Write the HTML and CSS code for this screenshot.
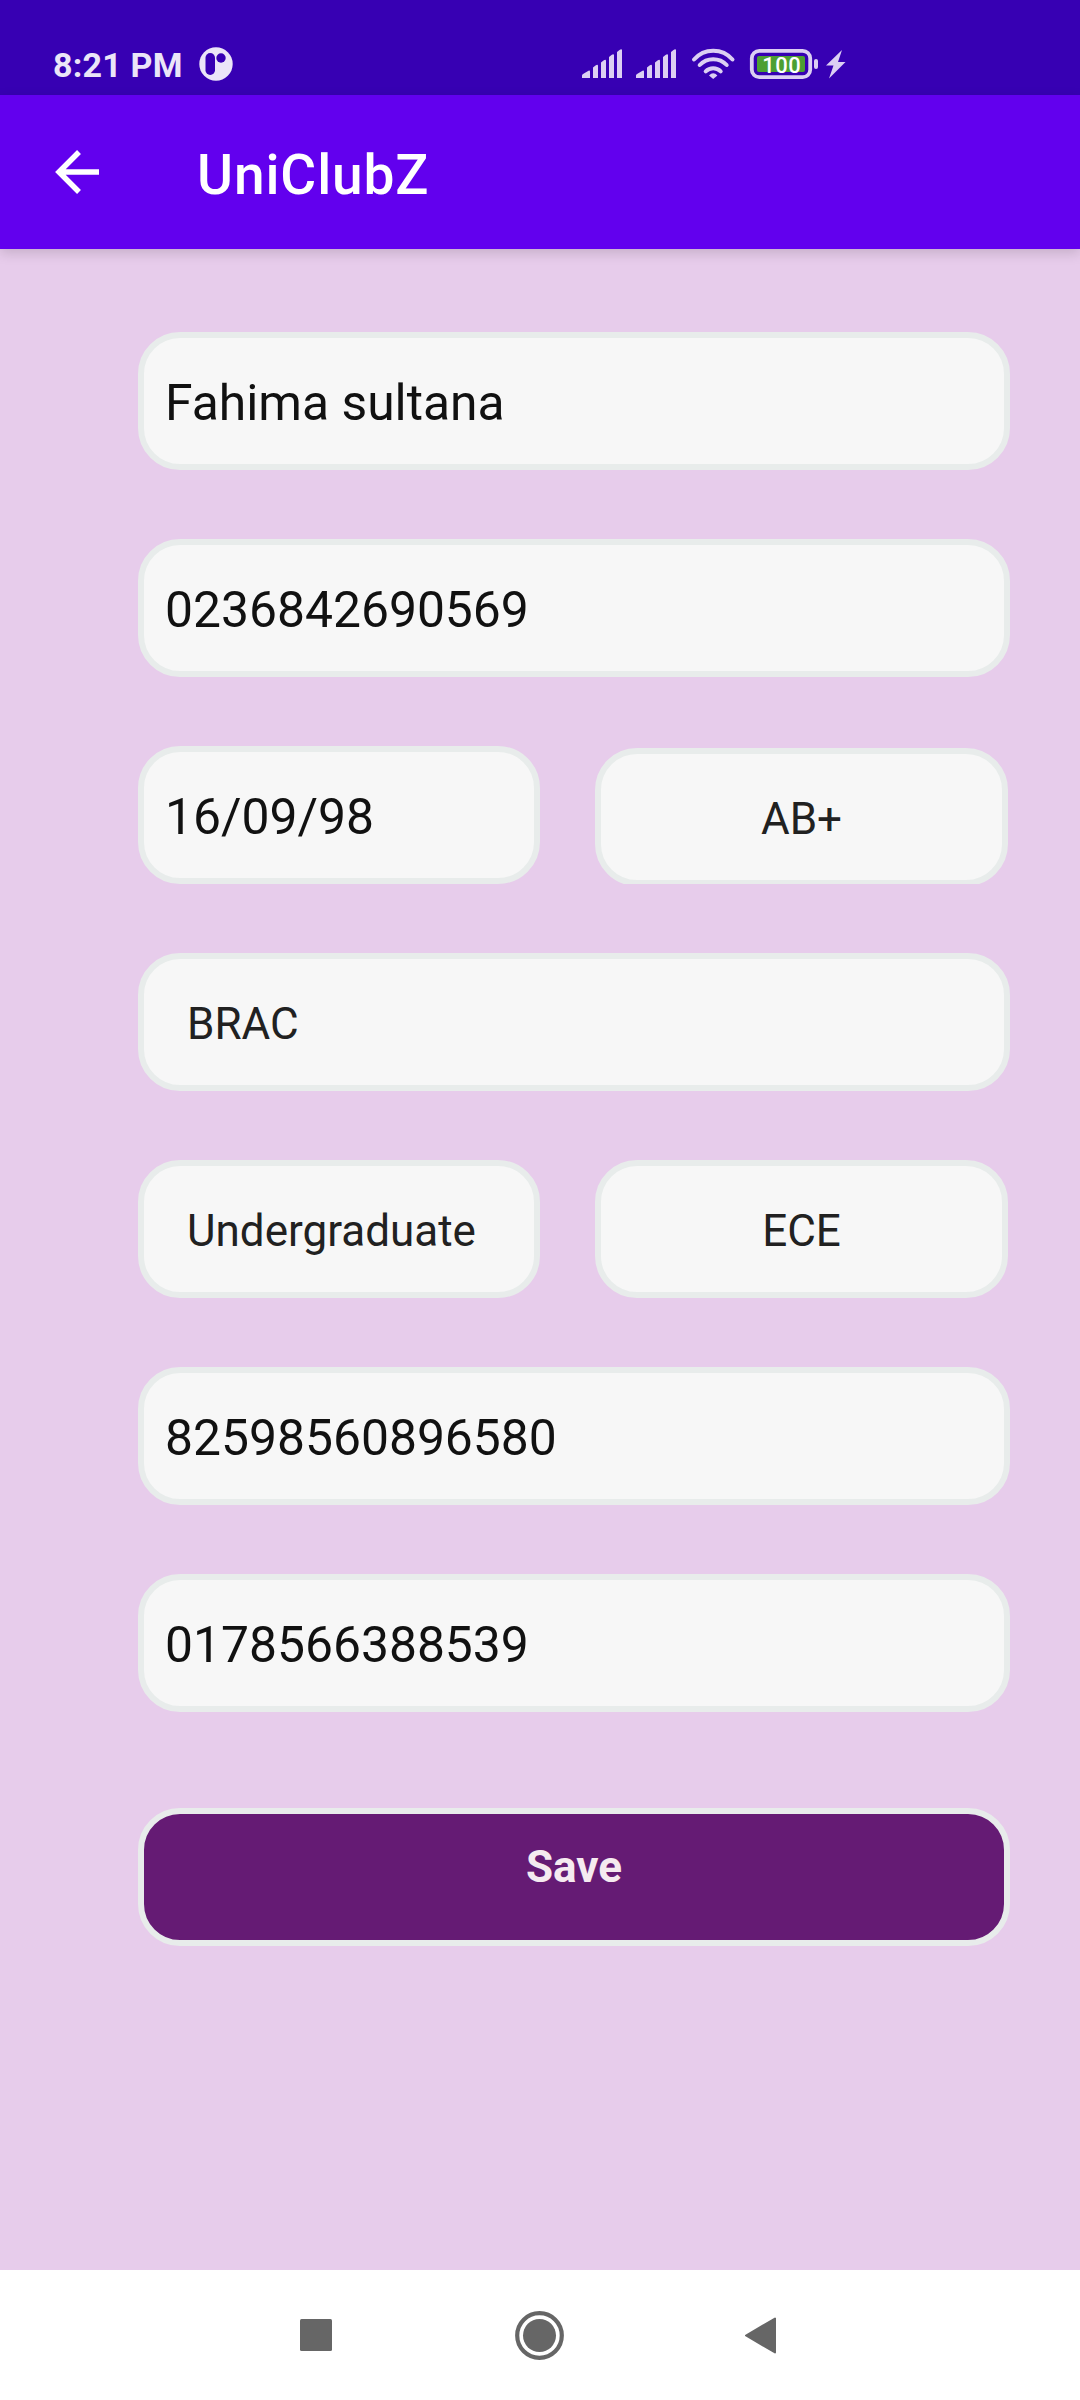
FILE: index.html
```html
<!DOCTYPE html>
<html lang="en">
<head>
<meta charset="utf-8">
<title>UniClubZ</title>
<link rel="stylesheet" href="styles.css">
</head>
<body>
<div class="screen">
  <header class="status">
    <span class="time">8:21 PM</span>
    <svg class="app-icon" width="34" height="34" viewBox="0 0 34 34">
      <circle cx="17" cy="17" r="16.7" fill="#ebe5f8"/>
      <rect x="6.500" y="6" width="9.500" height="22" rx="4.700" fill="#3700b3"/>
      <circle cx="22" cy="11" r="4.700" fill="#3700b3"/>
    </svg>
    <svg class="indicators" width="270" height="34" viewBox="580 47 270 34" fill="#dccff3">
      <g id="signal">
        <path d="M582 75.500q0-1 1-1.500l5.500-3.200q1.500-.6 1.500.7v6.500h-8zM593 67.500l2.500-2q2.500-1.500 2.500.5v12h-5zM601 62.500l2.500-2q2.500-1.500 2.500.5v17h-5zM609 57l2.500-2q2.500-1.500 2.500.5v22.500h-5zM617 52l2.500-2q2.500-1.500 2.500.5v27.500h-5z"/>
      </g>
      <use href="#signal" x="54"/>
      <g fill="none" stroke="#dccff3" stroke-width="4" stroke-linecap="round">
        <path d="M694 59.500a25.500 25.500 0 0 1 38.500 0M699.700 65a18.500 18.500 0 0 1 27 0M705.700 71.300a10.500 10.500 0 0 1 15 0"/>
      </g>
      <path d="M713.200 79l-4.200-3.500q4.200-4.500 8.400 0z"/>
      <rect x="751.800" y="50.800" width="58.400" height="26.400" rx="7.500" fill="none" stroke="#dccff3" stroke-width="3.800"/>
      <rect x="757" y="56" width="48" height="16" rx="2" fill="#4c9f33"/>
      <text x="781.700" y="73" text-anchor="middle" class="charge">100</text>
      <rect x="814" y="59" width="4" height="10" rx="2"/>
      <path d="M842 50l-16 15.500h7.500l-4.500 13 16.500-16.500h-7.500z"/>
    </svg>
  </header>
  <div class="appbar">
    <svg class="back" width="44" height="44" viewBox="0 0 44 44" fill="none" stroke="#fff" stroke-width="5.500">
      <path d="M24 2L4 22l20 20M4 22h40"/>
    </svg>
    <h1 class="title">UniClubZ</h1>
  </div>
  <main class="form">
    <div class="field">Fahima sultana</div>
    <div class="field">0236842690569</div>
    <div class="row">
      <div class="field">16/09/98</div>
      <div class="clip"><div class="field choice centered">AB+</div></div>
    </div>
    <div class="field choice">BRAC</div>
    <div class="row">
      <div class="field choice">Undergraduate</div>
      <div class="field choice centered">ECE</div>
    </div>
    <div class="field">82598560896580</div>
    <div class="field">0178566388539</div>
    <button class="save">Save</button>
  </main>
  <nav class="navbar">
    <svg width="480" height="52" viewBox="300 2310 480 52" fill="#666">
      <rect x="300" y="2319" width="32" height="32" rx="1.500"/>
      <circle cx="539.500" cy="2335.500" r="22.300" fill="none" stroke="#666" stroke-width="4.200"/>
      <circle cx="539.500" cy="2335.500" r="16.500"/>
      <path d="M746 2335.500L775 2318.500v34z" stroke="#666" stroke-width="2" stroke-linejoin="round"/>
    </svg>
  </nav>
</div>
</body>
</html>
```
FILE: styles.css
```css
* { box-sizing: border-box; }
body { margin: 0; font-family: Roboto, "Liberation Sans", sans-serif; }
.screen { display: flex; flex-direction: column; width: 1080px; height: 2400px; background: #e7cceb; }
.status { display: flex; height: 95px; padding: 47px 0 0 53px; background: #3700b3; }
.time { width: 146px; font-size: 34px; line-height: 36px; font-weight: 700; letter-spacing: .2px; color: #ebe5f8; white-space: nowrap; }
.app-icon { display: block; }
.indicators { display: block; margin-left: 347px; }
.charge { font-size: 22px; font-weight: 500; letter-spacing: .4px; fill: #fff; }
.appbar { display: flex; height: 154px; padding-left: 55px; background: #6200ee; box-shadow: 0 4px 12px rgba(0,0,0,.15); }
.back { display: block; margin-top: 55px; }
.title { margin: 48px 0 0 98px; font-size: 55px; line-height: 64px; font-weight: 500; letter-spacing: .9px; color: #fff; }
.form { display: flex; flex-direction: column; flex: 1; gap: 69px; padding: 83px 70px 0 138px; }
.field { height: 138px; padding: 0 21px; border: 6px solid #e8eceb; border-radius: 42px; background: #f7f7f7; color: #111; font-size: 49.800px; line-height: 131px; white-space: nowrap; }
.row { display: grid; grid-template-columns: 402px 413px; gap: 55px; height: 138px; }
.choice { padding: 0 43px; font-size: 44px; line-height: 130px; color: #212121; }
.centered { padding: 0; text-align: center; }
.clip { height: 138px; padding-top: 2px; overflow: hidden; }
.save { height: 138px; margin-top: 27px; padding: 0 0 21px; border: 6px solid #e8eceb; border-radius: 42px; background: #651b74; color: #f5eaf0; font: 700 44px Roboto, "Liberation Sans", sans-serif; }
.navbar { display: flex; height: 130px; padding: 40px 0 0 300px; background: #fff; }
```
